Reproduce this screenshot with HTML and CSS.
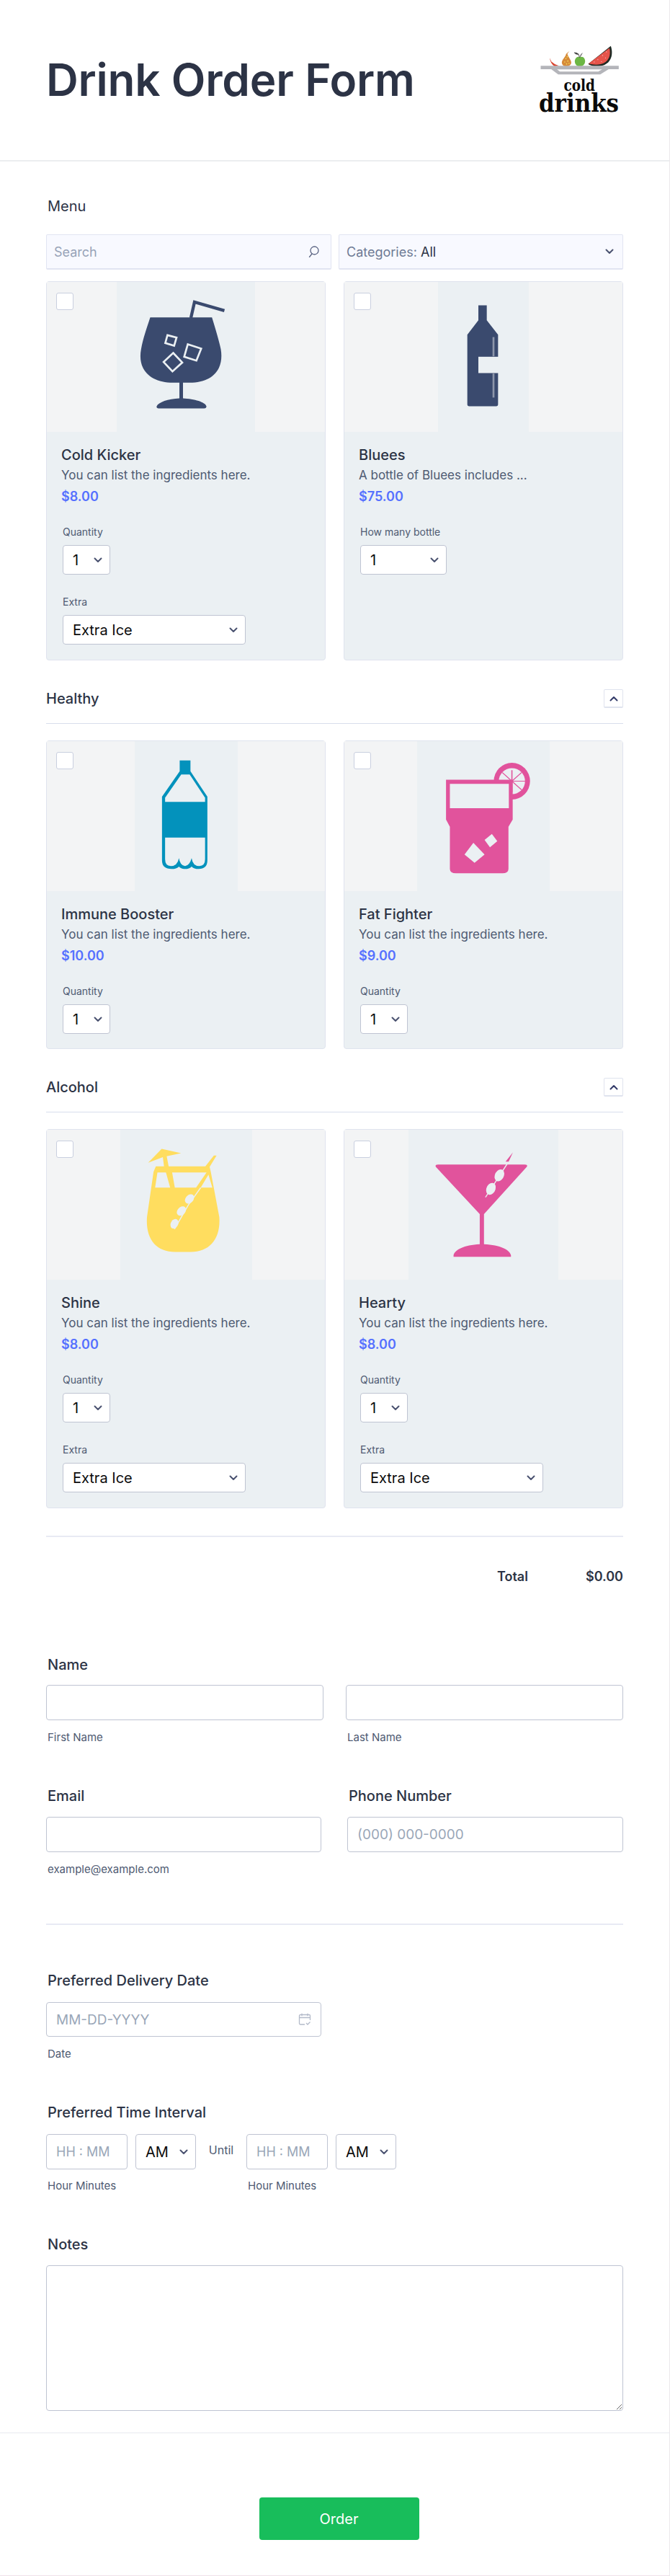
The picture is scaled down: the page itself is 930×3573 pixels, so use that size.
FILE: index.html
```html
<!DOCTYPE html>
<html lang="en">
<head>
<meta charset="utf-8">
<title>Drink Order Form</title>
<link rel="stylesheet" href="styles.css">
</head>
<body>
<svg class="defs" width="0" height="0" aria-hidden="true">
  <symbol id="chev" viewBox="0 0 12 8"><path d="M1.5 1.500 6 6l4.500-4.500" fill="none" stroke="#4a5270" stroke-width="2" stroke-linecap="round" stroke-linejoin="round"/></symbol>
  <symbol id="up" viewBox="0 0 12 8"><path d="M1.500 6.500 6 2l4.500 4.500" fill="none" stroke="#343c6a" stroke-width="2" stroke-linecap="round" stroke-linejoin="round"/></symbol>
</svg>
<main class="form">
  <header class="head">
    <h1 class="title">Drink Order Form</h1>
    <svg class="logo" viewBox="85 70 335 285">
      <path d="M130 125 L136 140 Q148 152 168 158 L150 160 Q132 150 130 125Z" fill="#d9442f"/>
      <path d="M212 96 L203 108 C208 125 222 135 219 148 Q214 160 198 160 Q182 160 180 146 C180 130 194 125 198 108Z" fill="#d68a3a"/>
      <g fill="#f2e05a"><circle cx="197" cy="128" r="2.500"/><circle cx="205" cy="138" r="2.500"/><circle cx="192" cy="142" r="2.500"/><circle cx="200" cy="150" r="2.500"/><circle cx="210" cy="148" r="2.500"/><circle cx="203" cy="120" r="2.500"/></g>
      <path d="M255 122 C268 115 278 128 277 140 C276 155 264 162 255 160 C246 162 235 155 234 140 C234 128 244 116 255 122Z" fill="#6cb644"/>
      <path d="M254 124 Q252 112 248 108 M256 122 Q258 110 266 105 M232 103 Q242 102 250 110 Q238 112 232 103Z" fill="#333" stroke="#333" stroke-width="2"/>
      <path d="M384 75 C396 110 385 150 344 158 C322 162 298 158 290 150Z" fill="#1f2a24"/>
      <path d="M378 84 C386 112 376 142 342 151 C322 155 306 152 292 148Z" fill="#e6544a"/>
      <g fill="#f6b7c0"><circle cx="350" cy="115" r="2"/><circle cx="330" cy="132" r="2"/><circle cx="362" cy="125" r="2"/><circle cx="345" cy="140" r="2"/><circle cx="315" cy="142" r="2"/><circle cx="366" cy="100" r="2"/></g>
      <path d="M92 158H417V172H375L340 194H165L136 172H92Z" fill="#b4b5ba"/>
      <path d="M160 173H348L332 182H172Z" fill="#fff"/>
      <text class="logo-small" x="253" y="262" text-anchor="middle" textLength="130" lengthAdjust="spacingAndGlyphs">cold</text>
      <text class="logo-big" x="251" y="350" text-anchor="middle" textLength="333" lengthAdjust="spacingAndGlyphs">drinks</text>
    </svg>
  </header>

  <section class="content">
    <div class="menu-label">Menu</div>
    <div class="filters">
      <div class="filter"><span class="ph">Search</span>
        <svg class="search-ic" viewBox="0 0 16 16"><circle cx="9.500" cy="6.500" r="5.500" fill="none" stroke="#5d6684" stroke-width="1.300"/><path d="M6 11 2.500 15.500" stroke="#5d6684" stroke-width="1.300" fill="none" stroke-linecap="round"/></svg>
      </div>
      <div class="filter"><span><span class="cat">Categories:</span> <span class="cat-all">All</span></span>
        <svg class="chev"><use href="#chev"/></svg>
      </div>
    </div>

    <div class="cards cards-first">
      <article class="card card-tall">
        <div class="media">
          <span class="check"></span>
          <svg class="pic pic-194" viewBox="335 30 578 625" preserveAspectRatio="none">
            <rect x="335" y="30" width="578" height="625" fill="#ebf0f3"/>
            <path d="M475 178H733Q760 265 770 310C785 400 730 450 640 450H612V515C660 518 705 530 710 548Q710 557 700 557H510Q500 557 502 548C510 530 550 518 597 515V450H570C480 450 420 400 437 310C445 265 460 225 475 178Z" fill="#3a4a6e"/>
            <path d="M645 180 660 114 785 150" fill="none" stroke="#3a4a6e" stroke-width="13"/>
            <g fill="none" stroke="#ebf0f3" stroke-width="8">
              <path d="M547 252 585 262 575 296 538 285Z"/>
              <path d="M632 290 688 308 668 358 617 342Z"/>
              <path d="M571 326 609 366 568 403 531 364Z"/>
            </g>
          </svg>
        </div>
        <div class="info">
          <h3 class="name">Cold Kicker</h3>
          <p class="desc">You can list the ingredients here.</p>
          <p class="price">$8.00</p>
        </div>
        <div class="opt"><label class="opt-label">Quantity</label><div class="select sel-qty"><span>1</span><svg class="chev"><use href="#chev"/></svg></div></div>
        <div class="opt"><label class="opt-label">Extra</label><div class="select sel-extra"><span>Extra Ice</span><svg class="chev"><use href="#chev"/></svg></div></div>
      </article>
      <article class="card card-tall">
        <div class="media">
          <span class="check"></span>
          <svg class="pic pic-126" viewBox="415 30 378 625" preserveAspectRatio="none">
            <rect x="415" y="30" width="378" height="625" fill="#ebf0f3"/>
            <path d="M583 128H618V190L665 250V540Q665 548 657 548H545Q537 548 537 540V250L583 190Z" fill="#3a4a6e"/>
            <rect x="642" y="260" width="8" height="80" fill="#8d96aa"/>
            <rect x="642" y="412" width="8" height="100" fill="#8d96aa"/>
            <rect x="583" y="342" width="84" height="68" fill="#ebf0f3"/>
          </svg>
        </div>
        <div class="info">
          <h3 class="name">Bluees</h3>
          <p class="desc">A bottle of Bluees includes ...</p>
          <p class="price">$75.00</p>
        </div>
        <div class="opt"><label class="opt-label">How many bottle</label><div class="select sel-wide"><span>1</span><svg class="chev"><use href="#chev"/></svg></div></div>
      </article>
    </div>

    <div class="cat-head"><h2 class="cat-title">Healthy</h2><button class="collapse" type="button"><svg class="chev"><use href="#up"/></svg></button></div>

    <div class="cards">
      <article class="card">
        <div class="media">
          <span class="check"></span>
          <svg class="pic pic-143" viewBox="254 20 268 622" preserveAspectRatio="none">
            <rect x="254" y="20" width="268" height="622" fill="#ebf0f3"/>
            <path d="M371 100H399V145L443 250V515Q443 550 420 550Q408 550 402 540Q396 550 385 550Q374 550 369 540Q363 550 350 550Q325 550 325 515V250L371 145Z" fill="#0392bc"/>
            <path d="M375 158H397L437 255V272H333V255Z" fill="#ebf0f3"/>
            <path d="M333 420H437V510Q437 538 422 538Q405 538 402 505Q397 535 385 538Q372 535 369 505Q365 538 348 538Q333 538 333 510Z" fill="#ebf0f3"/>
          </svg>
        </div>
        <div class="info">
          <h3 class="name">Immune Booster</h3>
          <p class="desc">You can list the ingredients here.</p>
          <p class="price">$10.00</p>
        </div>
        <div class="opt"><label class="opt-label">Quantity</label><div class="select sel-qty"><span>1</span><svg class="chev"><use href="#chev"/></svg></div></div>
      </article>
      <article class="card">
        <div class="media">
          <span class="check"></span>
          <svg class="pic pic-184" viewBox="989 20 344 622" preserveAspectRatio="none">
            <rect x="989" y="20" width="344" height="622" fill="#ebf0f3"/>
            <ellipse cx="1235" cy="186" rx="47" ry="76" fill="#e1539c"/>
            <ellipse cx="1235" cy="186" rx="34" ry="54" fill="#ebf0f3"/>
            <g stroke="#e1539c" stroke-width="3"><path d="M1235 140V232M1200 186H1270M1210 150 1260 222M1260 150 1210 222"/></g>
            <path d="M1064 180H1237V345L1226 375V550Q1226 568 1210 568H1090Q1074 568 1074 550V375L1064 345Z" fill="#e1539c"/>
            <path d="M1074 197H1227V298H1074ZM1183 405 1197 435 1178 460 1164 430ZM1135 442 1164 490 1138 525 1112 490Z" fill="#ebf0f3"/>
          </svg>
        </div>
        <div class="info">
          <h3 class="name">Fat Fighter</h3>
          <p class="desc">You can list the ingredients here.</p>
          <p class="price">$9.00</p>
        </div>
        <div class="opt"><label class="opt-label">Quantity</label><div class="select sel-qty"><span>1</span><svg class="chev"><use href="#chev"/></svg></div></div>
      </article>
    </div>

    <div class="cat-head"><h2 class="cat-title">Alcohol</h2><button class="collapse" type="button"><svg class="chev"><use href="#up"/></svg></button></div>

    <div class="cards">
      <article class="card card-tall">
        <div class="media">
          <span class="check"></span>
          <svg class="pic pic-183" viewBox="218 18 341 622" preserveAspectRatio="none">
            <rect x="218" y="18" width="341" height="622" fill="#ebf0f3"/>
            <path d="M290 155 325 97 375 115 338 128 343 170H438L460 125 467 125 449 172 452 192 474 380C478 470 450 525 400 525H360C310 525 283 470 287 380L304 192 310 170H331L328 132Z" fill="#ffdd5f"/>
            <path d="M314 195H336L347 258H308ZM352 195H441L414 258H359ZM446 204 456 258H426Z" fill="#ebf0f3"/>
            <path d="M426 258 394 330 358 430" fill="none" stroke="#ebf0f3" stroke-width="3"/>
            <g fill="#ebf0f3"><ellipse cx="397" cy="305" rx="11" ry="20" transform="rotate(15 397 305)"/><ellipse cx="376" cy="355" rx="11" ry="20" transform="rotate(15 376 355)"/><ellipse cx="358" cy="408" rx="10" ry="20" transform="rotate(10 358 408)"/></g>
          </svg>
        </div>
        <div class="info">
          <h3 class="name">Shine</h3>
          <p class="desc">You can list the ingredients here.</p>
          <p class="price">$8.00</p>
        </div>
        <div class="opt"><label class="opt-label">Quantity</label><div class="select sel-qty"><span>1</span><svg class="chev"><use href="#chev"/></svg></div></div>
        <div class="opt"><label class="opt-label">Extra</label><div class="select sel-extra"><span>Extra Ice</span><svg class="chev"><use href="#chev"/></svg></div></div>
      </article>
      <article class="card card-tall">
        <div class="media">
          <span class="check"></span>
          <svg class="pic pic-208" viewBox="966 18 389 622" preserveAspectRatio="none">
            <rect x="966" y="18" width="389" height="622" fill="#ebf0f3"/>
            <path d="M1043 162H1267Q1277 162 1273 172L1162 368V493C1205 497 1228 515 1232 538V545H1083V538C1087 515 1110 497 1151 493V368L1037 172Q1034 162 1043 162Z" fill="#e1539c"/>
            <path d="M1237 112 1226 150 1218 150Z" fill="#e1539c"/>
            <path d="M1222 160 1166 298" fill="none" stroke="#ebf0f3" stroke-width="3"/>
            <g fill="#ebf0f3"><ellipse cx="1202" cy="207" rx="12" ry="25" transform="rotate(10 1202 207)"/><ellipse cx="1180" cy="263" rx="12" ry="25" transform="rotate(10 1180 263)"/></g>
          </svg>
        </div>
        <div class="info">
          <h3 class="name">Hearty</h3>
          <p class="desc">You can list the ingredients here.</p>
          <p class="price">$8.00</p>
        </div>
        <div class="opt"><label class="opt-label">Quantity</label><div class="select sel-qty"><span>1</span><svg class="chev"><use href="#chev"/></svg></div></div>
        <div class="opt"><label class="opt-label">Extra</label><div class="select sel-extra"><span>Extra Ice</span><svg class="chev"><use href="#chev"/></svg></div></div>
      </article>
    </div>

    <div class="total"><span class="total-label">Total</span><span class="total-value">$0.00</span></div>

    <div class="field field-name">
      <label class="label">Name</label>
      <div class="row row-name">
        <div class="col"><input class="input" type="text"><span class="sub">First Name</span></div>
        <div class="col"><input class="input" type="text"><span class="sub">Last Name</span></div>
      </div>
    </div>

    <div class="row row-contact">
      <div class="col">
        <label class="label">Email</label>
        <input class="input" type="text">
        <span class="sub">example@example.com</span>
      </div>
      <div class="col">
        <label class="label">Phone Number</label>
        <input class="input" type="text" placeholder="(000) 000-0000">
      </div>
    </div>

    <hr class="divider">

    <div class="field field-date">
      <label class="label">Preferred Delivery Date</label>
      <div class="date-box">
        <input class="input date" type="text" placeholder="MM-DD-YYYY">
        <svg class="cal" viewBox="0 0 18 18"><path d="M9 16H3a1.500 1.500 0 0 1-1.500-1.500V4A1.500 1.500 0 0 1 3 2.500h12A1.500 1.500 0 0 1 16.500 4v6M1.500 6.500h15M5 .8v3.400M13 .8v3.400M11 14l2 2 3.500-3.500" fill="none" stroke="#b3bac9" stroke-width="1.300"/></svg>
      </div>
      <span class="sub">Date</span>
    </div>

    <div class="field field-time">
      <label class="label">Preferred Time Interval</label>
      <div class="time-row">
        <div class="time-col">
          <div class="time-inputs"><input class="input time" type="text" placeholder="HH : MM"><div class="select ampm"><span>AM</span><svg class="chev"><use href="#chev"/></svg></div></div>
          <span class="sub">Hour Minutes</span>
        </div>
        <span class="until">Until</span>
        <div class="time-col">
          <div class="time-inputs"><input class="input time" type="text" placeholder="HH : MM"><div class="select ampm"><span>AM</span><svg class="chev"><use href="#chev"/></svg></div></div>
          <span class="sub">Hour Minutes</span>
        </div>
      </div>
    </div>

    <div class="field field-notes">
      <label class="label">Notes</label>
      <textarea class="notes"></textarea>
    </div>
  </section>

  <footer class="foot"><button class="order" type="button">Order</button></footer>
</main>
</body>
</html>
```
FILE: styles.css
```css
* { box-sizing: border-box; }
html, body { margin: 0; padding: 0; }
body { background: #fff; font-family: Inter, "Liberation Sans", sans-serif; color: #2c3345; }
.defs { position: absolute; }
.form { width: 930px; height: 3573px; border-right: 1px solid #ece8ec; border-bottom: 1px solid #f0e2ea; display: flex; flex-direction: column; }

.head { height: 224px; border-bottom: 2px solid #eceef0; display: flex; align-items: center; justify-content: space-between; padding: 0 69px 0 64px; }
.title { margin: 0; font-size: 62px; font-weight: 600; line-height: 1.2; color: #2c3345; letter-spacing: -0.2px; }
.logo { width: 112px; height: 95px; display: block; margin-top: -3px; overflow: visible; }
.logo-small { font-family: "DejaVu Serif", serif; font-weight: 700; font-size: 66px; fill: #0a0a0a; }
.logo-big { font-family: "DejaVu Serif", serif; font-weight: 700; font-size: 108px; fill: #0a0a0a; }

.content { padding: 0 64px; flex: 1; }
.menu-label { margin-top: 50px; font-size: 20px; line-height: 24px; font-weight: 400; padding-left: 2px; color: #2c3345; }
.filters { display: grid; grid-template-columns: 396px 395px; gap: 10px; margin-top: 27px; }
.filter { height: 49px; background: #f8f9ff; border: 1px solid #e1e4f2; border-bottom-width: 2px; border-radius: 2px; padding: 0 12px 0 10px; display: flex; align-items: center; justify-content: space-between; font-size: 18px; }
.ph { color: #97a3b8; }
.cat { color: #6f7b95; }
.cat-all { color: #2c3345; font-weight: 400; }
.search-ic { width: 16px; height: 16px; margin-right: 4px; }
.chev { width: 12px; height: 8px; flex: none; }

.cards { display: grid; grid-template-columns: 388px 388px; gap: 25px; }
.cards-first { margin-top: 16px; }
.card { background: #ebf0f3; border: 1px solid #dfe3ee; border-radius: 4px; height: 428px; display: flex; flex-direction: column; }
.card-tall { height: 526px; }
.media { position: relative; height: 208px; background: #f3f4f5; display: flex; justify-content: center; flex: none; }
.check { position: absolute; left: 13px; top: 15px; width: 24px; height: 24px; background: #fff; border: 1px solid #c9cfdf; border-radius: 3px; }
.pic { display: block; height: 208px; }
.pic-194 { width: 192px; }
.pic-126 { width: 126px; }
.pic-143 { width: 143px; }
.pic-184 { width: 184px; }
.pic-183 { width: 183px; }
.pic-208 { width: 208px; }

.info { padding: 20px 20px 0; }
.name { margin: 0; font-size: 20px; line-height: 24px; font-weight: 500; color: #2c3345; }
.desc { margin: 4px 0 0; font-size: 17px; line-height: 24px; color: #4e5a72; }
.price { margin: 7px 0 0; font-size: 18px; line-height: 22px; font-weight: 600; color: #5570ff; }
.opt { padding: 0 0 0 22px; }
.info + .opt { margin-top: 29px; }
.opt + .opt { margin-top: 29px; }
.opt-label { display: block; font-size: 14px; line-height: 18px; margin-bottom: 9px; color: #4e5a72; }
.select { height: 41px; background: #fff; border: 1px solid #bfc4d2; border-radius: 4px; display: flex; align-items: center; justify-content: space-between; padding: 0 10px 0 13px; font-size: 20px; color: #0b0b0b; }
.sel-qty { width: 66px; }
.sel-wide { width: 120px; }
.sel-extra { width: 254px; }

.cat-head { display: flex; align-items: flex-start; justify-content: space-between; height: 48px; margin-top: 40px; margin-bottom: 23px; border-bottom: 1px solid #d8deec; }
.cat-title { margin: 0; font-size: 20px; font-weight: 500; line-height: 26px; color: #2c3345; }
.collapse { width: 27px; height: 26px; padding: 0; background: #fff; border: 1px solid #dfe3ee; border-bottom-width: 2px; border-radius: 2px; display: flex; align-items: center; justify-content: center; }

.total { margin-top: 38px; border-top: 2px solid #e8eaf4; padding-top: 44px; display: flex; justify-content: flex-end; font-size: 18px; line-height: 22px; font-weight: 600; color: #2c3345; }
.total-label { margin-right: 80px; }

.field-name { margin-top: 99px; }
.label { display: block; font-size: 20px; line-height: 24px; font-weight: 500; color: #2c3345; padding-left: 2px; }
.row { display: grid; }
.row-name { grid-template-columns: 385px 385px; gap: 31px; margin-top: 16px; }
.row-contact { grid-template-columns: 382px 383px; gap: 36px; margin-top: 60px; }
.row-contact .input { margin-top: 17px; }
.col { display: flex; flex-direction: column; }
.input { width: 100%; height: 49px; background: #fff; border: 1px solid #bfc4d2; border-radius: 4px; padding: 0 13px; font: 400 19px Inter, sans-serif; color: #2c3345; outline: none; }
.input::placeholder { color: #9aa7b8; opacity: 1; }
.sub { display: block; font-size: 15px; line-height: 18px; color: #4e5a72; padding-left: 2px; margin-top: 15px; }

.divider { border: 0; height: 2px; background: #e8eaf4; margin: 66px 0 0; }
.field-date { margin-top: 65px; }
.date-box { position: relative; width: 382px; margin-top: 18px; }
.date { height: 48px; display: block; }
.cal { position: absolute; right: 14px; top: 15px; width: 18px; height: 18px; }
.field-time { margin-top: 60px; }
.time-row { display: flex; align-items: flex-start; margin-top: 18px; }
.time-inputs { display: flex; gap: 11px; }
.time { width: 113px; height: 49px; font-size: 18px; }
.ampm { width: 84px; height: 49px; }
.time-col .sub { margin-top: 14px; }
.until { width: 70px; text-align: center; font-size: 16px; line-height: 22px; color: #4e5a72; margin-top: 11px; }
.field-notes { margin-top: 60px; }
.notes { display: block; width: 100%; height: 202px; margin-top: 17px; background: #fff; border: 1px solid #bfc4d2; border-radius: 4px; padding: 10px; font: 400 16px Inter, sans-serif; outline: none; }

.foot { height: 198px; border-top: 1px solid #e8e9ef; display: flex; justify-content: center; padding: 89px 0 0 12px; flex: none; }
.order { width: 222px; height: 59px; background: #18bd5b; border: 0; border-radius: 4px; color: #fff; font: 400 20px Inter, sans-serif; }
```
